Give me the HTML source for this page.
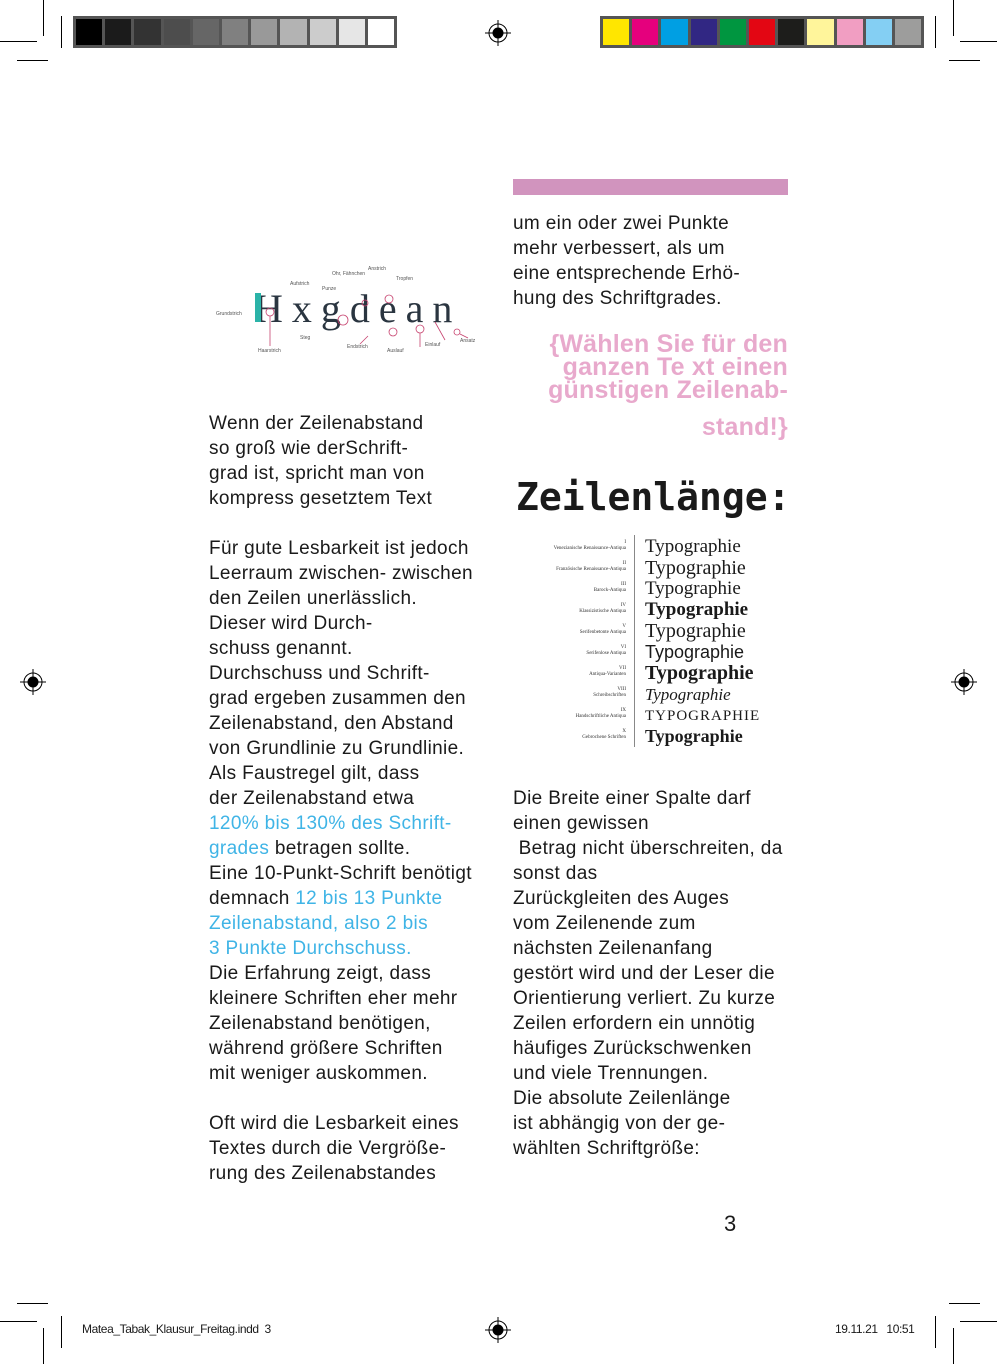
<!DOCTYPE html>
<html><head><meta charset="utf-8"><style>
*{margin:0;padding:0}
body{width:997px;height:1364px;position:relative;background:#fff;overflow:hidden;font-family:"Liberation Sans",Arial,sans-serif;color:#1a1a1a}
.a{position:absolute}
.l{position:absolute;font-size:19px;line-height:25px;white-space:nowrap;letter-spacing:0.35px}
.c{color:#3fb4e6}
.ln{position:absolute;background:#000}
.sw{position:absolute;top:16px;height:32px;background:#555;display:flex;padding:3px;box-sizing:border-box;gap:3px}
.sw div{flex:1}
.pk{position:absolute;right:209px;font-size:25px;line-height:23px;color:#e8a9cc;text-align:right;white-space:nowrap;width:300px;font-weight:bold;letter-spacing:0.2px}
.ty{position:absolute;left:645px;font-family:"Liberation Serif",serif;font-size:19px;white-space:nowrap;line-height:20px}
.lb{position:absolute;right:371px;font-family:"Liberation Serif",serif;font-size:5px;line-height:6px;text-align:right;color:#333;white-space:nowrap}
</style></head><body>
<div class="ln" style="left:43px;top:0;width:1px;height:36px"></div>
<div class="ln" style="left:0;top:41px;width:37px;height:1px"></div>
<div class="ln" style="left:17px;top:60px;width:31px;height:1px"></div>
<div class="ln" style="left:61px;top:16px;width:1px;height:32px"></div>
<div class="ln" style="left:953px;top:0;width:1px;height:36px"></div>
<div class="ln" style="left:960px;top:41px;width:37px;height:1px"></div>
<div class="ln" style="left:949px;top:60px;width:31px;height:1px"></div>
<div class="ln" style="left:935px;top:16px;width:1px;height:32px"></div>
<div class="ln" style="left:17px;top:1303px;width:31px;height:1px"></div>
<div class="ln" style="left:0;top:1321px;width:37px;height:1px"></div>
<div class="ln" style="left:43px;top:1328px;width:1px;height:36px"></div>
<div class="ln" style="left:61px;top:1316px;width:1px;height:32px"></div>
<div class="ln" style="left:949px;top:1303px;width:31px;height:1px"></div>
<div class="ln" style="left:960px;top:1321px;width:37px;height:1px"></div>
<div class="ln" style="left:953px;top:1328px;width:1px;height:36px"></div>
<div class="ln" style="left:935px;top:1316px;width:1px;height:32px"></div>
<div class="sw" style="left:73px;width:324px">
<div style="background:#000"></div><div style="background:#1b1b1b"></div><div style="background:#333"></div><div style="background:#4d4d4d"></div><div style="background:#666"></div><div style="background:#808080"></div><div style="background:#999"></div><div style="background:#b3b3b3"></div><div style="background:#ccc"></div><div style="background:#e6e6e6"></div><div style="background:#fff"></div></div>
<div class="sw" style="left:600px;width:324px">
<div style="background:#ffe600"></div><div style="background:#e5007d"></div><div style="background:#009fe3"></div><div style="background:#312783"></div><div style="background:#009640"></div><div style="background:#e30613"></div><div style="background:#1d1d1b"></div><div style="background:#fff59b"></div><div style="background:#f19ec2"></div><div style="background:#84cff3"></div><div style="background:#9d9d9c"></div></div>
<svg class="a" style="left:0;top:0" width="997" height="1364">
<g fill="none" stroke="#000" stroke-width="1">
<circle cx="498" cy="33" r="9"/><circle cx="498" cy="33" r="5" fill="#000"/><line x1="485" y1="33" x2="511" y2="33"/><line x1="498" y1="20" x2="498" y2="46"/>
<circle cx="498" cy="1330" r="9"/><circle cx="498" cy="1330" r="5" fill="#000"/><line x1="485" y1="1330" x2="511" y2="1330"/><line x1="498" y1="1317" x2="498" y2="1343"/>
<circle cx="33" cy="682" r="9"/><circle cx="33" cy="682" r="5" fill="#000"/><line x1="20" y1="682" x2="46" y2="682"/><line x1="33" y1="669" x2="33" y2="695"/>
<circle cx="964" cy="682" r="9"/><circle cx="964" cy="682" r="5" fill="#000"/><line x1="951" y1="682" x2="977" y2="682"/><line x1="964" y1="669" x2="964" y2="695"/>
</g>
</svg>
<svg class="a" style="left:210px;top:262px" width="270" height="95">
<g font-family="Liberation Sans" font-size="5" fill="#555">
<text x="6" y="53">Grundstrich</text><text x="80" y="23">Aufstrich</text><text x="112" y="28">Punze</text><text x="122" y="13">Ohr, Fähnchen</text><text x="158" y="8">Anstrich</text><text x="186" y="18">Tropfen</text><text x="90" y="77">Steg</text><text x="48" y="90">Haarstrich</text><text x="137" y="86">Endstrich</text><text x="177" y="90">Auslauf</text><text x="215" y="84">Einlauf</text><text x="250" y="80">Ansatz</text></g>
<text x="44" y="60" font-family="Liberation Serif" font-size="40" fill="#2a3540" letter-spacing="9">Hxgdean</text>
<rect x="45" y="31" width="6" height="29" fill="#2bb3a8"/>
<g stroke="#c7436f" fill="none" stroke-width="0.8"><circle cx="60" cy="50" r="4"/><circle cx="133" cy="58" r="5"/><circle cx="155" cy="41" r="3"/><circle cx="179" cy="37" r="4"/><circle cx="183" cy="70" r="4"/><circle cx="210" cy="67" r="4"/><circle cx="247" cy="70" r="3"/><line x1="60" y1="54" x2="60" y2="84"/><line x1="158" y1="74" x2="150" y2="82"/><line x1="210" y1="71" x2="210" y2="85"/><line x1="225" y1="60" x2="235" y2="78"/><line x1="250" y1="72" x2="258" y2="76"/></g>
</svg>
<div class="l" style="left:209px;top:411px">Wenn der Zeilenabstand<br>so groß wie derSchrift-<br>grad ist, spricht man von<br>kompress gesetztem Text</div>
<div class="l" style="left:209px;top:536px">Für gute Lesbarkeit ist jedoch<br>Leerraum zwischen- zwischen<br>den Zeilen unerlässlich.<br>Dieser wird Durch-<br>schuss genannt.<br>Durchschuss und Schrift-<br>grad ergeben zusammen den<br>Zeilenabstand, den Abstand<br>von Grundlinie zu Grundlinie.<br>Als Faustregel gilt, dass<br>der Zeilenabstand etwa<br><span class="c">120% bis 130% des Schrift-</span><br><span class="c">grades</span> betragen sollte.<br>Eine 10-Punkt-Schrift benötigt<br>demnach <span class="c">12 bis 13 Punkte</span><br><span class="c">Zeilenabstand, also 2 bis</span><br><span class="c">3 Punkte Durchschuss.</span><br>Die Erfahrung zeigt, dass<br>kleinere Schriften eher mehr<br>Zeilenabstand benötigen,<br>während größere Schriften<br>mit weniger auskommen.</div>
<div class="l" style="left:209px;top:1111px">Oft wird die Lesbarkeit eines<br>Textes durch die Vergröße-<br>rung des Zeilenabstandes</div>
<div class="a" style="left:513px;top:179px;width:275px;height:16px;background:#d194be"></div>
<div class="l" style="left:513px;top:211px">um ein oder zwei Punkte<br>mehr verbessert, als um<br>eine entsprechende Erhö-<br>hung des Schriftgrades.</div>
<div class="pk" style="top:333px">{Wählen Sie für den<br>ganzen Te xt einen<br>günstigen Zeilenab-</div>
<div class="pk" style="top:416px">stand!}</div>
<div class="a" style="left:516px;top:474px;font-family:'DejaVu Sans Mono',monospace;font-weight:bold;font-size:38px;line-height:46px;color:#1a1a1a">Zeilenlänge:</div>
<div class="a" style="left:634px;top:535px;width:1px;height:212px;background:#888"></div>
<div class="ty" style="top:537px">Typographie</div>
<div class="ty" style="top:558px;font-size:20px">Typographie</div>
<div class="ty" style="top:579px">Typographie</div>
<div class="ty" style="top:600px;font-weight:bold">Typographie</div>
<div class="ty" style="top:621px;font-size:20px">Typographie</div>
<div class="ty" style="top:642px;font-family:'Liberation Sans';font-size:18px">Typographie</div>
<div class="ty" style="top:663px;font-weight:bold;font-size:20px">Typographie</div>
<div class="ty" style="top:685px;font-style:italic;font-size:17px">Typographie</div>
<div class="ty" style="top:706px;font-size:15px;letter-spacing:1px">TYPOGRAPHIE</div>
<div class="ty" style="top:726px;font-weight:bold;font-size:18px">Typographie</div>
<div class="lb" style="top:540px">I<br>Venezianische Renaissance-Antiqua</div>
<div class="lb" style="top:561px">II<br>Französische Renaissance-Antiqua</div>
<div class="lb" style="top:582px">III<br>Barock-Antiqua</div>
<div class="lb" style="top:603px">IV<br>Klassizistische Antiqua</div>
<div class="lb" style="top:624px">V<br>Serifenbetonte Antiqua</div>
<div class="lb" style="top:645px">VI<br>Serifenlose Antiqua</div>
<div class="lb" style="top:666px">VII<br>Antiqua-Varianten</div>
<div class="lb" style="top:687px">VIII<br>Schreibschriften</div>
<div class="lb" style="top:708px">IX<br>Handschriftliche Antiqua</div>
<div class="lb" style="top:729px">X<br>Gebrochene Schriften</div>
<div class="l" style="left:513px;top:786px">Die Breite einer Spalte darf<br>einen gewissen<br>&nbsp;Betrag nicht überschreiten, da<br>sonst das<br>Zurückgleiten des Auges<br>vom Zeilenende zum<br>nächsten Zeilenanfang<br>gestört wird und der Leser die<br>Orientierung verliert. Zu kurze<br>Zeilen erfordern ein unnötig<br>häufiges Zurückschwenken<br>und viele Trennungen.<br>Die absolute Zeilenlänge<br>ist abhängig von der ge-<br>wählten Schriftgröße:</div>
<div class="a" style="left:724px;top:1211px;font-size:22px">3</div>
<div class="a" style="left:82px;top:1322px;font-size:12px;letter-spacing:-0.4px">Matea_Tabak_Klausur_Freitag.indd &nbsp;3</div>
<div class="a" style="left:835px;top:1322px;font-size:12px;letter-spacing:-0.4px">19.11.21 &nbsp;&nbsp;10:51</div>
</body></html>
